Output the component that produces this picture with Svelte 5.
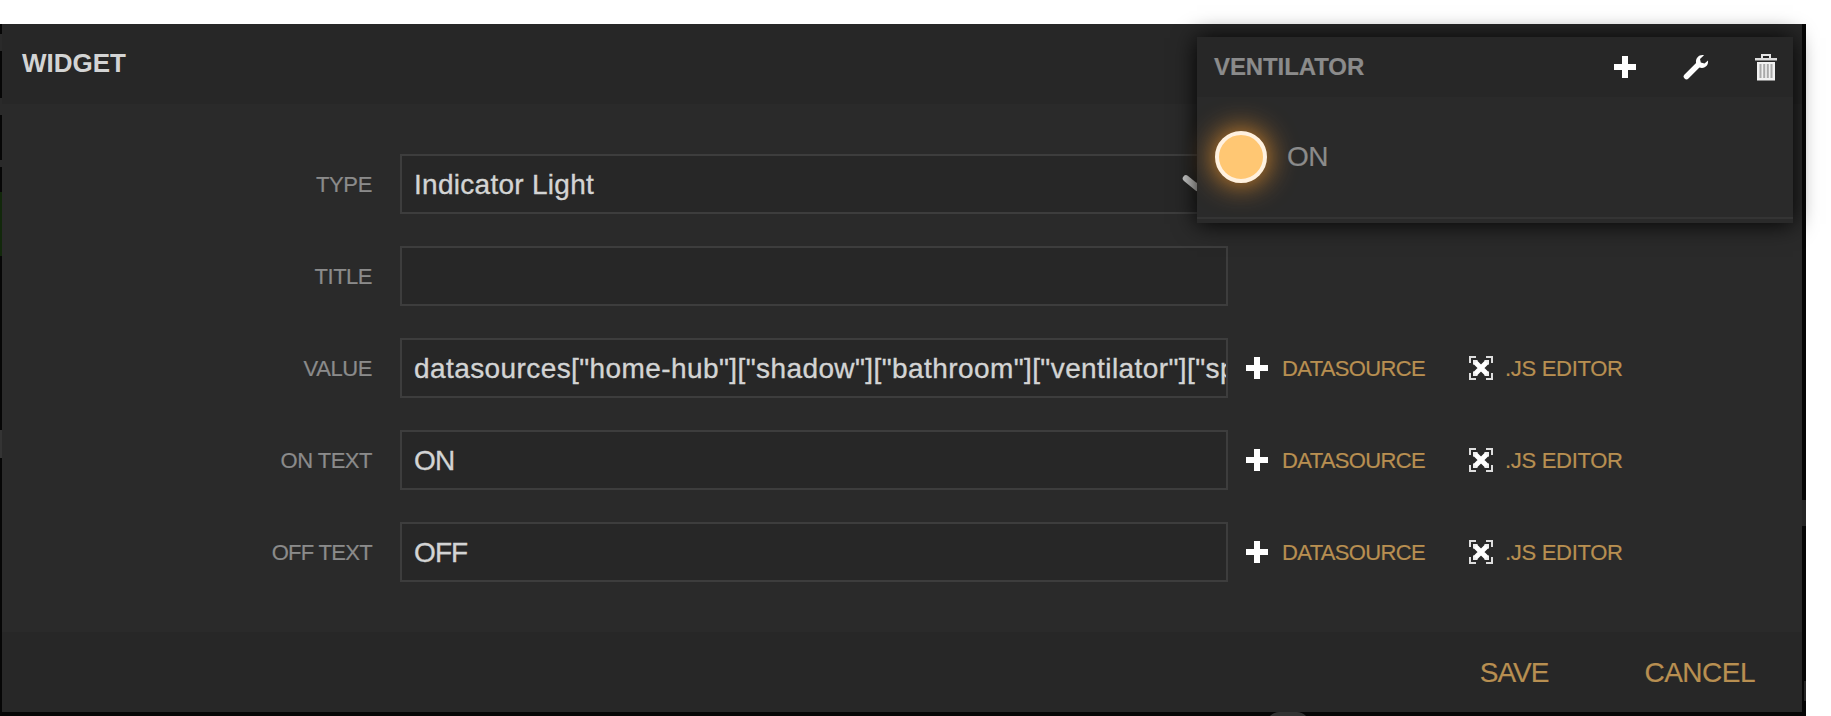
<script>
  const fields = [
    { label: 'TYPE', ls: -0.35, value: 'Indicator Light', vs: 0.28, select: true },
    { label: 'TITLE', ls: -0.5, value: '', vs: 0 },
    { label: 'VALUE', ls: -0.4, value: 'datasources["home-hub"]["shadow"]["bathroom"]["ventilator"]["sp', vs: 0.41, tools: true },
    { label: 'ON TEXT', ls: -0.5, value: 'ON', vs: -0.8, tools: true },
    { label: 'OFF TEXT', ls: -0.7, value: 'OFF', vs: -0.9, tools: true }
  ];
</script>

{#snippet plus()}
  <svg class="plus" width="24" height="24" viewBox="0 0 24 24"><path d="M9 1h6v8h8v6h-8v8H9v-8H1V9h8z" fill="#fff" /></svg>
{/snippet}

<div class="stage">
  <i class="sliver a"></i><i class="sliver b"></i><i class="sliver c"></i><i class="sliver d"></i><i class="sliver e"></i><i class="sliver f"></i>
  <i class="edge"></i><i class="knob"></i>
  <section class="modal">
    <header>WIDGET</header>
    <div class="body">
      {#each fields as f}
        <div class="row">
          <div class="label"><span style:letter-spacing="{f.ls}px">{f.label}</span></div>
          <div class="field">
            <span style:letter-spacing="{f.vs}px">{f.value}</span>
            {#if f.select}
              <svg class="chevron" width="30" height="20" viewBox="0 0 30 20"><path d="M4 5.500 14.500 14 25 5.500" fill="none" stroke="#c9caca" stroke-width="6.500" stroke-linecap="round" /></svg>
            {/if}
          </div>
          {#if f.tools}
            <div class="tools">
              {@render plus()}<span class="ds">DATASOURCE</span>
              <svg class="expand" width="24" height="24" viewBox="0 0 24 24" fill="none" stroke="#fff">
                <path d="M1 7V1h6M17 1h6v6M23 17v6h-6M7 23H1v-6" stroke="#ddd" stroke-width="2" />
                <path d="m6 6 12 12M18 6 6 18" stroke-width="5" />
                <path d="M4 4h5l-5 5zM20 4h-5l5 5zM4 20h5l-5-5zM20 20h-5l5-5z" fill="#eee" stroke="none" />
              </svg>
              <span class="js">.JS EDITOR</span>
            </div>
          {/if}
        </div>
      {/each}
    </div>
    <footer><span class="save">SAVE</span><span class="cancel">CANCEL</span></footer>
  </section>

  <section class="pane">
    <div class="pane-head">
      <span class="name">VENTILATOR</span>
      <div class="actions">
        {@render plus()}
        <svg width="26" height="26" viewBox="0 0 26 26"><path d="M3.500 22.500 15 11" stroke="#fff" stroke-width="5.500" stroke-linecap="round" /><path d="M21 1.300C16.500.2 12.500 4 13 8.500c.3 3.500 3 5.500 6 5.400 4-.1 6.500-3.200 6-7.400l-3.500 3-3.700-1-.8-3.500z" fill="#fff" /></svg>
        <svg width="22" height="27" viewBox="0 0 22 27"><path d="M7 4V1h8v3" fill="none" stroke="#e6e6e6" stroke-width="2" /><path d="M0 4h22v2.500H0z" fill="#ddd" /><path d="M2 8h18v18.500H2z" fill="#f1f1f1" /><path d="M5.500 10v14M9.200 10v14M12.800 10v14M16.500 10v14" stroke="#aaa" stroke-width="2" /></svg>
      </div>
    </div>
    <div class="pane-body"><i class="light"></i><span>ON</span></div>
  </section>
</div>

<style>
  :global(body) { margin: 0; background: #fff; }
  .stage { position: relative; width: 1831px; height: 716px; overflow: hidden; box-sizing: border-box; padding: 24px 0 0 2px; font-family: "Liberation Sans", Arial, sans-serif; background: linear-gradient(#060606, #060606) 0 24px / 1806px 692px no-repeat #fff; white-space: nowrap; }
  .modal { width: 1800px; background: #2a2a2a; position: relative; }
  header { height: 80px; box-sizing: border-box; padding: 24px 0 0 20px; background: #272727; color: #d3d4d4; font-size: 26px; line-height: 30px; font-weight: bold; }
  .body { height: 528px; box-sizing: border-box; padding-top: 50px; display: flex; flex-direction: column; gap: 32px; }
  .row { display: flex; height: 60px; align-items: center; }
  .label { width: 370px; margin-right: 28px; padding-top: 2px; text-align: right; font-size: 22px; color: #8b8b8b; -webkit-text-stroke: 0.2px; }
  .field { width: 828px; height: 60px; box-sizing: border-box; border: 2px solid #3d3d3d; background: #272727; color: #d3d4d4; font-size: 28px; line-height: 58px; padding-left: 12px; overflow: hidden; position: relative; -webkit-text-stroke: 0.35px; }
  .chevron { position: absolute; right: 14px; top: 17px; }
  .tools { display: flex; align-items: center; font-size: 22px; color: #b88f51; padding-left: 17px; }
  .tools span { padding-top: 2px; -webkit-text-stroke: 0.2px; }
  .ds { width: 187px; margin-left: 13px; letter-spacing: -0.65px; }
  .js { margin-left: 12px; letter-spacing: -0.3px; }
  footer { height: 80px; box-sizing: border-box; padding-top: 2px; display: flex; align-items: center; justify-content: flex-end; gap: 96px; padding-right: 47px; background: #272727; color: #b88f51; font-size: 28px; -webkit-text-stroke: 0.2px; }
  .save { letter-spacing: -1px; }
  .cancel { letter-spacing: -0.5px; }
  .pane { position: absolute; left: 1197px; top: 37px; width: 596px; height: 186px; background: #2a2a2a; box-shadow: 0 1px 22px rgba(0,0,0,.95); color: #8b8b8b; }
  .pane-head { height: 60px; box-sizing: border-box; background: #272727; display: flex; align-items: center; justify-content: space-between; padding: 0 16px 0 17px; }
  .name { font-size: 24px; font-weight: bold; letter-spacing: -0.1px; -webkit-text-stroke: 0.2px; }
  .actions { display: flex; align-items: center; gap: 46px; }
  .pane-body { height: 122px; box-sizing: border-box; border-bottom: 2px solid #343434; display: flex; align-items: center; padding-left: 18px; gap: 20px; font-size: 28px; }
  .pane-body span { letter-spacing: -0.6px; -webkit-text-stroke: 0.2px; }
  .light { width: 52px; height: 52px; box-sizing: border-box; border-radius: 50%; border: 4px solid #fff1df; background: #ffc773; box-shadow: 0 0 30px #f7992c; }
  .sliver { position: absolute; left: 0; width: 2px; background: #2a2a2a; }
  .a { top: 34px; height: 17px; } .b { top: 98px; height: 17px; } .c { top: 160px; height: 7px; } .d { top: 192px; height: 64px; background: #12280b; } .e { top: 430px; height: 28px; background: #343434; }
  .f { left: 1802px; width: 4px; top: 500px; height: 26px; background: #252525; }
  .edge { position: absolute; left: 1804px; top: 681px; width: 2px; height: 20px; background: #262626; }
  .knob { position: absolute; left: 1267px; top: 712px; width: 42px; height: 24px; border-radius: 20px; background: #333; }
</style>
